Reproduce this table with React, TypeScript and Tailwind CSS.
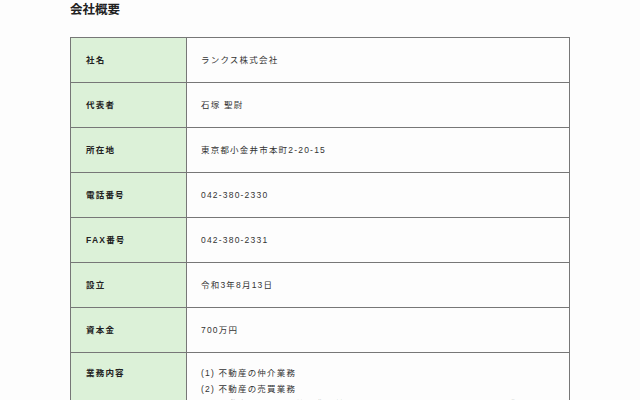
const rows: { label: string; value: string[] }[] = [
  { label: '社名', value: ['ランクス株式会社'] },
  { label: '代表者', value: ['石塚 聖尉'] },
  { label: '所在地', value: ['東京都小金井市本町2-20-15'] },
  { label: '電話番号', value: ['042-380-2330'] },
  { label: 'FAX番号', value: ['042-380-2331'] },
  { label: '設立', value: ['令和3年8月13日'] },
  { label: '資本金', value: ['700万円'] },
  {
    label: '業務内容',
    value: ['(1) 不動産の仲介業務', '(2) 不動産の売買業務', '(3) 不動産の賃貸及び管理業務並びにこれらに関するコンサルティング業務'],
  },
];

const font = { fontFamily: '"Liberation Sans", "Noto Sans CJK JP", sans-serif' };

export default function App() {
  return (
    <div className="min-h-[400px] bg-[#fdfdfd] text-[#222]" style={font}>
      <div className="mx-[70px] pt-[1px]">
        <h2 className="text-[12.5px] font-bold leading-[18px] text-[#222]">会社概要</h2>
        <div className="mt-[18px] border-t border-l border-r border-[#777]">
          {rows.map((r) => {
            const multi = r.value.length > 1;
            return (
              <div key={r.label} className="flex border-b border-[#777]">
                <div
                  className={`w-[116px] shrink-0 border-r border-[#777] bg-[#dcf1d8] pl-[15px] text-[8.5px] font-bold tracking-[1.2px] text-[#222] ${
                    multi ? 'pt-[13px] leading-[15px]' : 'flex h-[44px] items-center'
                  }`}
                >
                  {r.label}
                </div>
                <div
                  className={`flex-1 pl-[14px] text-[8.5px] tracking-[1.2px] text-[#333] ${
                    multi ? 'pt-[13px] pb-[10px] leading-[15.5px]' : 'flex h-[44px] items-center'
                  }`}
                >
                  {multi ? (
                    <div>
                      {r.value.map((v) => (
                        <div key={v}>{v}</div>
                      ))}
                    </div>
                  ) : (
                    r.value[0]
                  )}
                </div>
              </div>
            );
          })}
        </div>
      </div>
    </div>
  );
}
